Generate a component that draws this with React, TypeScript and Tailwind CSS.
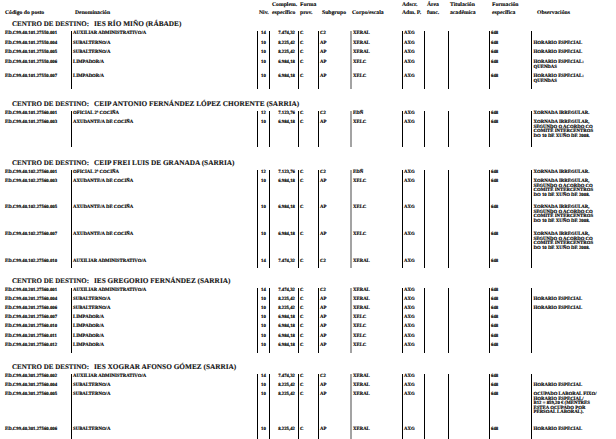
import React from "react";

type Row = {
  code: string;
  den: string;
  niv: string;
  comp: string;
  sub: string;
  corpo: string;
  obs: string[];
  h: string;
};

type Section = {
  name: string;
  titleH: string;
  rows: Row[];
};

const XORNADA = [
  "XORNADA IRREGULAR,",
  "SEGUNDO O ACORDO CO",
  "COMITÉ INTERCENTROS",
  "DO 10 DE XUÑO DE 2008.",
];

const sections: Section[] = [
  {
    name: "IES RÍO MIÑO (RÁBADE)",
    titleH: "h-[13px]",
    rows: [
      { code: "ED.C99.40.101.27550.001", den: "AUXILIAR ADMINISTRATIVO/A", niv: "14", comp: "7.474,32", sub: "C2", corpo: "XERAL", obs: [], h: "h-[10px]" },
      { code: "ED.C99.40.101.27550.004", den: "SUBALTERNO/A", niv: "10", comp: "8.225,42", sub: "AP", corpo: "XERAL", obs: ["HORARIO ESPECIAL"], h: "h-[9px]" },
      { code: "ED.C99.40.101.27550.005", den: "SUBALTERNO/A", niv: "10", comp: "8.225,42", sub: "AP", corpo: "XERAL", obs: ["HORARIO ESPECIAL"], h: "h-[10px]" },
      { code: "ED.C99.40.101.27550.006", den: "LIMPADOR/A", niv: "10", comp: "6.984,18", sub: "AP", corpo: "XELC", obs: ["HORARIO ESPECIAL:", "QUENDAS"], h: "h-[14px]" },
      { code: "ED.C99.40.101.27550.007", den: "LIMPADOR/A", niv: "10", comp: "6.984,18", sub: "AP", corpo: "XELC", obs: ["HORARIO ESPECIAL:", "QUENDAS"], h: "h-[15px]" },
    ],
  },
  {
    name: "CEIP ANTONIO FERNÁNDEZ LÓPEZ CHORENTE (SARRIA)",
    titleH: "h-[22px]",
    rows: [
      { code: "ED.C99.40.101.27560.001", den: "OFICIAL 2ª COCIÑA", niv: "12", comp: "7.123,76", sub: "C2", corpo: "EDÑ", obs: ["XORNADA IRREGULAR."], h: "h-[9px]" },
      { code: "ED.C99.40.101.27560.003", den: "AXUDANTE/A DE COCIÑA", niv: "10", comp: "6.984,18", sub: "AP", corpo: "XELC", obs: XORNADA, h: "h-[27px]" },
    ],
  },
  {
    name: "CEIP FREI LUIS DE GRANADA (SARRIA)",
    titleH: "h-[23px]",
    rows: [
      { code: "ED.C99.40.102.27560.001", den: "OFICIAL 2ª COCIÑA", niv: "12", comp: "7.123,76", sub: "C2", corpo: "EDÑ", obs: ["XORNADA IRREGULAR."], h: "h-[9px]" },
      { code: "ED.C99.40.102.27560.003", den: "AXUDANTE/A DE COCIÑA", niv: "10", comp: "6.984,18", sub: "AP", corpo: "XELC", obs: XORNADA, h: "h-[26px]" },
      { code: "ED.C99.40.102.27560.005", den: "AXUDANTE/A DE COCIÑA", niv: "10", comp: "6.984,18", sub: "AP", corpo: "XELC", obs: XORNADA, h: "h-[27px]" },
      { code: "ED.C99.40.102.27560.007", den: "AXUDANTE/A DE COCIÑA", niv: "10", comp: "6.984,18", sub: "AP", corpo: "XELC", obs: XORNADA, h: "h-[27px]" },
      { code: "ED.C99.40.102.27560.010", den: "AUXILIAR ADMINISTRATIVO/A", niv: "14", comp: "7.474,32", sub: "C2", corpo: "XERAL", obs: [], h: "h-[9px]" },
    ],
  },
  {
    name: "IES GREGORIO FERNÁNDEZ (SARRIA)",
    titleH: "h-[20px]",
    rows: [
      { code: "ED.C99.40.201.27560.001", den: "AUXILIAR ADMINISTRATIVO/A", niv: "14", comp: "7.474,32", sub: "C2", corpo: "XERAL", obs: [], h: "h-[9px]" },
      { code: "ED.C99.40.201.27560.004", den: "SUBALTERNO/A", niv: "10", comp: "8.225,42", sub: "AP", corpo: "XERAL", obs: ["HORARIO ESPECIAL"], h: "h-[9px]" },
      { code: "ED.C99.40.201.27560.006", den: "SUBALTERNO/A", niv: "10", comp: "8.225,42", sub: "AP", corpo: "XERAL", obs: ["HORARIO ESPECIAL"], h: "h-[9px]" },
      { code: "ED.C99.40.201.27560.007", den: "LIMPADOR/A", niv: "10", comp: "6.984,18", sub: "AP", corpo: "XELC", obs: [], h: "h-[9px]" },
      { code: "ED.C99.40.201.27560.010", den: "LIMPADOR/A", niv: "10", comp: "6.984,18", sub: "AP", corpo: "XELC", obs: [], h: "h-[10px]" },
      { code: "ED.C99.40.201.27560.011", den: "LIMPADOR/A", niv: "10", comp: "6.984,18", sub: "AP", corpo: "XELC", obs: [], h: "h-[9px]" },
      { code: "ED.C99.40.201.27560.012", den: "LIMPADOR/A", niv: "10", comp: "6.984,18", sub: "AP", corpo: "XELC", obs: [], h: "h-[10px]" },
    ],
  },
  {
    name: "IES XOGRAR AFONSO GÓMEZ (SARRIA)",
    titleH: "h-[21px]",
    rows: [
      { code: "ED.C99.40.301.27560.002", den: "AUXILIAR ADMINISTRATIVO/A", niv: "14", comp: "7.474,32", sub: "C2", corpo: "XERAL", obs: [], h: "h-[9px]" },
      { code: "ED.C99.40.301.27560.004", den: "SUBALTERNO/A", niv: "10", comp: "8.225,42", sub: "AP", corpo: "XERAL", obs: ["HORARIO ESPECIAL"], h: "h-[9px]" },
      { code: "ED.C99.40.301.27560.005", den: "SUBALTERNO/A", niv: "10", comp: "8.225,42", sub: "AP", corpo: "XERAL", obs: ["OCUPADO LABORAL FIXO/", "HORARIO ESPECIAL/", "B12 = 859,20 € (MENTRES", "ESTEA OCUPADO POR", "PERSOAL LABORAL)."], h: "h-[35px]" },
      { code: "ED.C99.40.301.27560.006", den: "SUBALTERNO/A", niv: "10", comp: "8.225,42", sub: "AP", corpo: "XERAL", obs: ["HORARIO ESPECIAL"], h: "h-[20px]" },
    ],
  },
];

const GRID =
  "grid grid-cols-[71px_186px_12px_29px_20px_32px_52px_22px_24px_41px_42px_85px]";
const C = "pt-[1px] leading-[4.6px] whitespace-nowrap";
const L = "border-l border-black";

function DataRow({ r }: { r: Row }) {
  return (
    <div className={`${GRID} ${r.h} text-[4.8px] font-bold text-black [-webkit-text-stroke:0.15px_#000]`}>
      <div className={`${C} pl-[5px]`}>{r.code}</div>
      <div className={`${C} ${L} pl-[1px]`}>{r.den}</div>
      <div className={`${C} ${L} text-center`}>{r.niv}</div>
      <div className={`${C} ${L} text-right pr-[3px]`}>{r.comp}</div>
      <div className={`${C} ${L} pl-[1px]`}>C</div>
      <div className={`${C} ${L} pl-[1px]`}>{r.sub}</div>
      <div className={`${C} border-l-[2px] border-[#a3a3a3] pl-[1px]`}>{r.corpo}</div>
      <div className={`${C} ${L} pl-[1px]`}>AXG</div>
      <div className={`${C} ${L}`}></div>
      <div className={`${C} ${L}`}></div>
      <div className={`${C} ${L} pl-[1px]`}>648</div>
      <div className={`${C} border-l-[1.5px] border-black pl-[1.5px]`}>
        {r.obs.map((o, i) => (
          <div key={i}>{o}</div>
        ))}
      </div>
    </div>
  );
}

const H = "flex flex-col justify-end pb-[1px] leading-[8px] whitespace-nowrap";

function Header() {
  return (
    <div className={`${GRID} h-[18px] text-[5.7px] font-bold text-black [-webkit-text-stroke:0.1px_#000]`}>
      <div className={`${H} pl-[5px]`}>
        <div>Código do posto</div>
      </div>
      <div className={`${H} pl-[4px]`}>
        <div>Denominación</div>
      </div>
      <div className={`${H} pl-[2px]`}>
        <div>Niv.</div>
      </div>
      <div className={`${H} pl-[3px]`}>
        <div>Complem.</div>
        <div>específico</div>
      </div>
      <div className={`${H} pl-[2px]`}>
        <div>Forma</div>
        <div>prov.</div>
      </div>
      <div className={`${H} pl-[4px]`}>
        <div>Subgrupo</div>
      </div>
      <div className={`${H} pl-[2px]`}>
        <div>Corpo/escala</div>
      </div>
      <div className={`${H}`}>
        <div>Adscr.</div>
        <div>Adm. P.</div>
      </div>
      <div className={`${H} pl-[3px]`}>
        <div>Área</div>
        <div>func.</div>
      </div>
      <div className={`${H} pl-[2px]`}>
        <div>Titulación</div>
        <div>académica</div>
      </div>
      <div className={`${H} pl-[3px]`}>
        <div>Formación</div>
        <div>específica</div>
      </div>
      <div className={`${H} pl-[6px]`}>
        <div>Observacións</div>
      </div>
    </div>
  );
}

export default function App() {
  return (
    <div className="w-[616px] h-[439px] overflow-hidden bg-white text-black antialiased font-['Liberation_Serif','Times_New_Roman',serif] [text-rendering:geometricPrecision]">
      <Header />
      {sections.map((s, i) => (
        <div key={i}>
          <div
            className={`${s.titleH} flex items-end pb-[3px] pl-[12px] leading-[8px] font-bold whitespace-nowrap text-[#111] [-webkit-text-stroke:0.1px_#000]`}
          >
            <span className="inline-block w-[82px] text-[7px]">CENTRO DE DESTINO:</span>
            <span className="text-[7.3px]">{s.name}</span>
          </div>
          {s.rows.map((r, j) => (
            <DataRow key={j} r={r} />
          ))}
        </div>
      ))}
    </div>
  );
}
